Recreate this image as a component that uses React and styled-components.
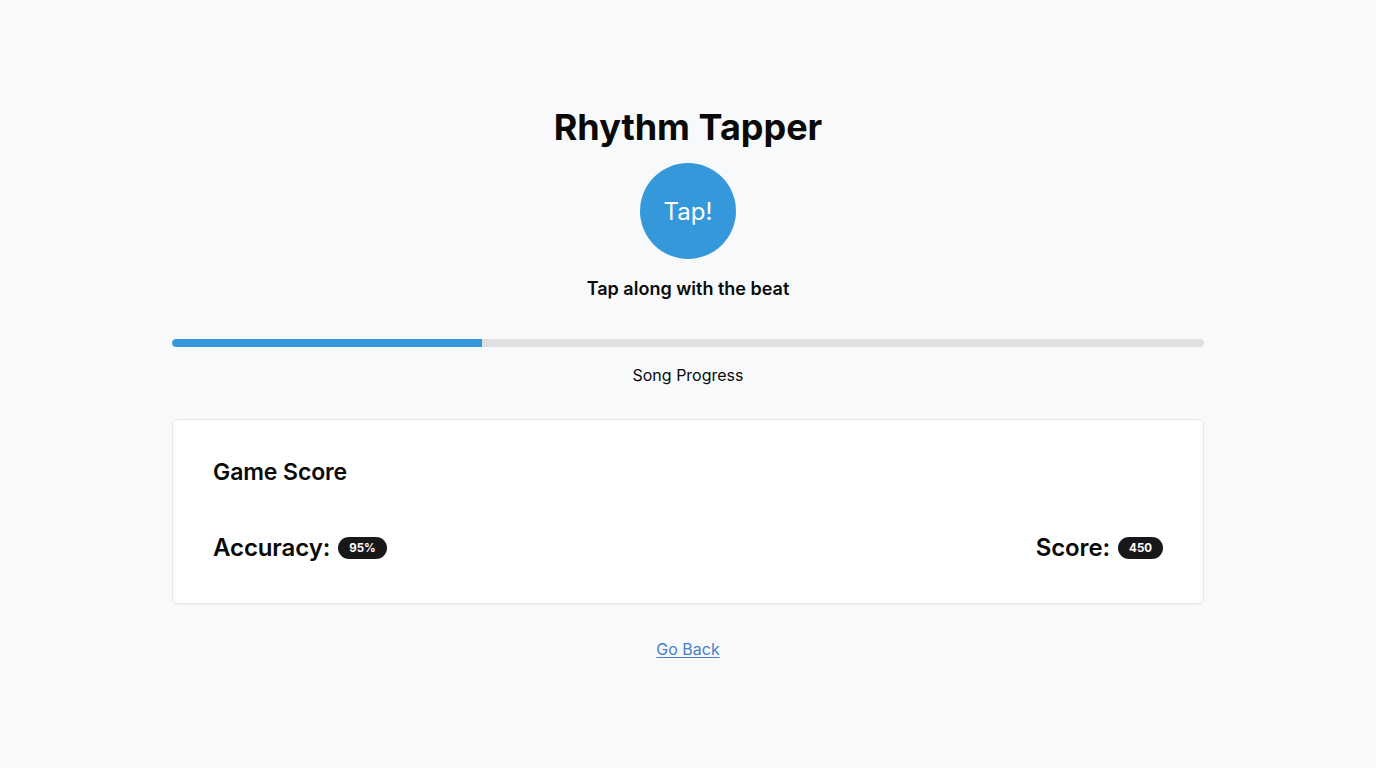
import React from "react";
import styled, { createGlobalStyle } from "styled-components";

const GlobalStyle = createGlobalStyle`
  html, body {
    margin: 0;
    padding: 0;
    background: #f8f9fa;
    font-family: Inter, "Noto Sans", "Liberation Sans", sans-serif;
    color: #0a0a0a;
  }
`;

const Page = styled.div`
  min-height: 100vh;
  display: flex;
  justify-content: center;
  padding-top: 105px;
  box-sizing: border-box;
`;

const Wrapper = styled.div`
  width: 1032px;
  display: flex;
  flex-direction: column;
  align-items: center;
`;

const Title = styled.h1`
  margin: 0;
  font-size: 36px;
  line-height: 44px;
  font-weight: 700;
`;

const TapButton = styled.button`
  margin-top: 14px;
  width: 96px;
  height: 96px;
  border-radius: 50%;
  border: none;
  background: #3498db;
  color: #fff;
  font-family: inherit;
  font-size: 24px;
  cursor: pointer;
  display: flex;
  align-items: center;
  justify-content: center;
`;

const Hint = styled.p`
  margin: 18px 0 0;
  font-size: 18px;
  line-height: 24px;
  font-weight: 600;
`;

const Track = styled.div`
  margin-top: 38px;
  width: 100%;
  height: 8px;
  border-radius: 4px;
  background: #dfe0e2;
  overflow: hidden;
`;

const Fill = styled.div`
  height: 100%;
  background: #3498db;
  border-radius: 4px 0 0 4px;
`;

const Caption = styled.p`
  margin: 16px 0 0;
  font-size: 16px;
  line-height: 24px;
`;

const Card = styled.section`
  margin-top: 32px;
  width: 100%;
  box-sizing: border-box;
  background: #fff;
  border: 1px solid #e5e7eb;
  border-radius: 6px;
  box-shadow: 0 1px 2px rgba(0, 0, 0, 0.04);
  padding: 38px 40px 39px;
  display: flex;
  flex-direction: column;
  gap: 46px;
`;

const CardTitle = styled.h2`
  margin: 0;
  font-size: 23px;
  line-height: 28px;
  font-weight: 600;
  letter-spacing: -0.1px;
`;

const StatRow = styled.div`
  display: flex;
  justify-content: space-between;
  align-items: center;
`;

const Stat = styled.div`
  display: flex;
  align-items: center;
  gap: 8px;
  font-size: 24px;
  line-height: 32px;
  font-weight: 600;
  letter-spacing: -0.1px;
`;

const Badge = styled.span`
  display: inline-flex;
  align-items: center;
  height: 22px;
  padding: 0 11px;
  border-radius: 11px;
  background: #18181b;
  color: #fff;
  font-size: 11.5px;
  font-weight: 700;
  letter-spacing: 0;
`;

const BackLink = styled.a`
  margin-top: 33px;
  font-size: 16px;
  line-height: 24px;
  color: #4a7fc8;
  text-decoration: underline;
  text-underline-offset: 2px;
`;

export default function App() {
  const progress = 30;
  return (
    <>
      <GlobalStyle />
      <Page>
        <Wrapper>
          <Title>Rhythm Tapper</Title>
          <TapButton>Tap!</TapButton>
          <Hint>Tap along with the beat</Hint>
          <Track>
            <Fill style={{ width: `${progress}%` }} />
          </Track>
          <Caption>Song Progress</Caption>
          <Card>
            <CardTitle>Game Score</CardTitle>
            <StatRow>
              <Stat>
                Accuracy: <Badge>95%</Badge>
              </Stat>
              <Stat>
                Score: <Badge>450</Badge>
              </Stat>
            </StatRow>
          </Card>
          <BackLink href="#">Go Back</BackLink>
        </Wrapper>
      </Page>
    </>
  );
}
